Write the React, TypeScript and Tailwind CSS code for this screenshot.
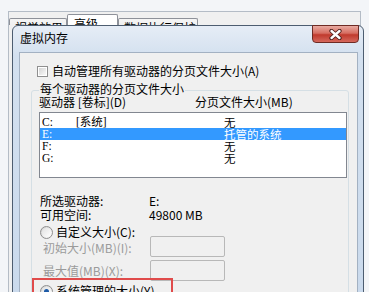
import React from 'react';

type Drive = { letter: string; label: string; size: string; selected?: boolean };

const drives: Drive[] = [
  { letter: 'C:', label: '[系统]', size: '无' },
  { letter: 'E:', label: '', size: '托管的系统', selected: true },
  { letter: 'F:', label: '', size: '无' },
  { letter: 'G:', label: '', size: '无' },
];

const Radio = ({ checked = false }: { checked?: boolean }) => (
  <span className="flex h-[13px] w-[13px] shrink-0 items-center justify-center rounded-full border border-[#8f8f8f] bg-[linear-gradient(135deg,#d2d2d2,#fdfdfd)]">
    <span className="flex h-[9px] w-[9px] items-center justify-center rounded-full bg-[linear-gradient(135deg,#e2e2e2,#ffffff)]">
      {checked && <span className="h-[5px] w-[5px] rounded-full bg-[#1d5aa6]" />}
    </span>
  </span>
);

const Tab = ({ label, active = false, width }: { label: string; active?: boolean; width: string }) => (
  <div
    className={`${width} shrink-0 border border-b-0 border-[#8e9199] ${
      active ? 'mt-[2px] bg-white pl-[6px] pt-[2px]' : 'mt-[6px] bg-[linear-gradient(#f5f5f5,#e2e2e2)] pl-[5px] pt-[2px]'
    } h-[24px] rounded-t-[2px] leading-[14px]`}
  >
    {label}
  </div>
);

export default function App() {
  return (
    <div className="relative h-[292px] w-[369px] overflow-hidden bg-[#f3f5f8] font-['Noto_Sans_CJK_SC',sans-serif] text-[12px] text-black">
      {/* background window: 性能选项, only its tab strip shows above the dialog */}
      <div className="ml-[8px] mt-[11px] h-[300px] w-[353px] border border-b-0 border-[#b4bcc6] bg-[#f0f0f0]">
        <div className="flex h-[13px] overflow-hidden">
          <Tab label="视觉效果" width="w-[58px]" />
          <Tab label="高级" active width="w-[51px]" />
          <Tab label="数据执行保护" width="w-[80px]" />
        </div>
      </div>

      {/* dialog: 虚拟内存 */}
      <div className="absolute left-[12px] top-[25px] h-[300px] w-[352px] rounded-t-[6px] border border-[#4d5d70] bg-[linear-gradient(#e6edf6,#d3e0ef_30px,#c9d9ec)]">
        <div className="h-[26px] pl-[7px] pt-[5px] leading-[14px]">虚拟内存</div>

        <button className="absolute -top-[1px] right-[4px] flex h-[18px] w-[47px] items-center justify-center rounded-b-[4px] border border-[#6e2b24] bg-[linear-gradient(#e9aba1,#d66d61_45%,#c03a2d_55%,#d5685c)]">
          <svg width="13" height="11" viewBox="0 0 13 11">
            <path d="M2.5 2 L10.5 9 M10.5 2 L2.5 9" stroke="#4a1c18" strokeWidth="4.2" strokeLinecap="round" />
            <path d="M2.5 2 L10.5 9 M10.5 2 L2.5 9" stroke="#ffffff" strokeWidth="2.4" strokeLinecap="round" />
          </svg>
        </button>

        <div className="ml-[6px] h-[260px] w-[339px] border border-[#a3b1c2] bg-[#f0f0f0]">
          <div className="ml-[17px] mt-[11px] flex h-[14px] items-center gap-[4px]">
            <span className="flex h-[11px] w-[11px] items-center justify-center border border-[#8f8f8f] bg-white">
              <span className="h-[7px] w-[7px] bg-[linear-gradient(135deg,#d4d4d4,#fafafa)]" />
            </span>
            <span className="leading-[14px]">自动管理所有驱动器的分页文件大小(A)</span>
          </div>

          <div className="relative ml-[11px] mt-[12px] h-[230px] w-[318px] rounded-[3px] border border-[#d5dfe5]">
            <span className="absolute -top-[9px] left-[7px] bg-[#f0f0f0] px-[1px] leading-[14px]">每个驱动器的分页文件大小</span>

            <div className="mt-[4px] flex pl-[7px] leading-[14px]">
              <span className="w-[156px]">驱动器 [卷标](D)</span>
              <span>分页文件大小(MB)</span>
            </div>

            <div className="ml-[7px] mt-[3px] h-[66px] w-[308px] border border-[#828790] bg-white pt-[3px] font-['Liberation_Serif','Noto_Sans_CJK_SC',serif]">
              {drives.map((d) => (
                <div
                  key={d.letter}
                  className={`flex h-[12px] pl-[2px] text-[11.5px] leading-[12px] ${d.selected ? 'bg-[#3399ff] text-white' : ''}`}
                >
                  <span className="w-[34px]">{d.letter}</span>
                  <span className="w-[148px]">{d.label}</span>
                  <span className="font-['Noto_Sans_CJK_SC',sans-serif]">{d.size}</span>
                </div>
              ))}
            </div>

            <div className="mt-[16px] pl-[8px] leading-[14px]">
              <div className="flex">
                <span className="w-[109px]">所选驱动器:</span>
                <span>E:</span>
              </div>
              <div className="flex">
                <span className="w-[109px]">可用空间:</span>
                <span>49800 MB</span>
              </div>
            </div>

            <div className="ml-[8px] mt-[3px] flex h-[14px] items-center gap-[3px] leading-[14px]">
              <Radio />
              <span>自定义大小(C):</span>
            </div>

            <div className="-mt-[3px] pl-[11px]">
              <div className="flex h-[21px]">
                <span className="w-[107px] pt-[5px] leading-[14px] text-[#9b9b9b]">初始大小(MB)(I):</span>
                <span className="h-[21px] w-[75px] rounded-[2px] border border-[#b8b8b8] bg-[#f0f0f0]" />
              </div>
              <div className="mt-[3px] flex h-[21px]">
                <span className="w-[107px] pt-[4px] leading-[14px] text-[#9b9b9b]">最大值(MB)(X):</span>
                <span className="h-[21px] w-[75px] rounded-[2px] border border-[#b8b8b8] bg-[#f0f0f0]" />
              </div>
            </div>

            <div className="ml-[8px] mt-[3px] flex h-[14px] items-center gap-[3px] leading-[14px]">
              <Radio checked />
              <span>系统管理的大小(Y)</span>
            </div>

            <div className="absolute left-[0px] top-[187px] h-[30px] w-[141px] border-2 border-[#e04b4b]" />
          </div>
        </div>
      </div>
    </div>
  );
}
